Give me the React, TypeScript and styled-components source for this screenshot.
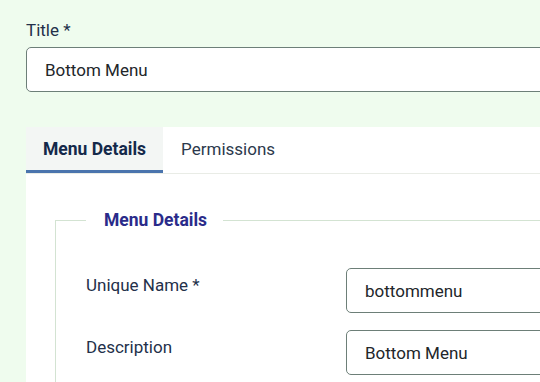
import React from 'react';
import styled, { createGlobalStyle } from 'styled-components';

const GlobalStyle = createGlobalStyle`
  html,
  body {
    margin: 0;
    padding: 0;
    background-color: #effcee;
    font-family: Roboto, "Liberation Sans", Arial, sans-serif;
    color: #22262a;
    overflow: hidden;
  }

  * {
    box-sizing: border-box;
  }
`;

const Page = styled.div`
  width: 540px;
  height: 382px;
  padding: 18px 0 0 26px;
  overflow: hidden;
`;

const FieldLabel = styled.label`
  display: block;
  margin-bottom: 5px;
  font-size: 17px;
  line-height: 24px;
  color: #23304a;
`;

const TextInput = styled.input<{ $width: number }>`
  display: block;
  width: ${(p) => p.$width}px;
  height: 45px;
  padding: 0 18px;
  border: 1px solid #6d7f78;
  border-radius: 5px;
  background-color: #fff;
  font-family: inherit;
  font-size: 17px;
  color: #22262a;
  outline: none;
`;

const Card = styled.div`
  width: 560px;
  margin-top: 35px;
  background-color: #fff;
`;

const TabList = styled.div`
  display: flex;
  border-bottom: 1px solid #e9ece6;
`;

const Tab = styled.button<{ $active?: boolean }>`
  height: 46px;
  padding: 0 17px 0 ${(p) => (p.$active ? 17 : 18)}px;
  border: 0;
  border-bottom: 3px solid ${(p) => (p.$active ? '#4a74ad' : 'transparent')};
  background-color: ${(p) => (p.$active ? '#f3f6f4' : '#fff')};
  font-family: inherit;
  font-size: ${(p) => (p.$active ? 17.5 : 17)}px;
  font-weight: ${(p) => (p.$active ? 700 : 400)};
  color: ${(p) => (p.$active ? '#14294a' : '#2c394c')};
  cursor: pointer;
`;

const TabBody = styled.div`
  padding: 34px 0 0 29px;
`;

const Fieldset = styled.fieldset`
  margin: 0;
  padding: 36px 0 20px 30px;
  border: 1px solid #d3e3d2;
  border-right: 0;
  min-width: 0;
`;

const Legend = styled.legend`
  padding: 0 16px 0 18px;
  font-size: 17.5px;
  font-weight: 700;
  line-height: 24px;
  color: #2a2b8a;
`;

const Row = styled.div`
  display: flex;
  align-items: flex-start;
  margin-bottom: 17px;
`;

const RowLabel = styled.label`
  width: 261px;
  padding-top: 5px;
  font-size: 17px;
  line-height: 24px;
  color: #23304a;
`;

export default function App() {
  return (
    <>
      <GlobalStyle />
      <Page>
        <FieldLabel htmlFor="title">Title *</FieldLabel>
        <TextInput id="title" $width={540} defaultValue="Bottom Menu" />
        <Card>
          <TabList>
            <Tab type="button" $active>
              Menu Details
            </Tab>
            <Tab type="button">Permissions</Tab>
          </TabList>
          <TabBody>
            <Fieldset>
              <Legend>Menu Details</Legend>
              <Row>
                <RowLabel htmlFor="menutype">Unique Name *</RowLabel>
                <TextInput id="menutype" $width={240} defaultValue="bottommenu" />
              </Row>
              <Row>
                <RowLabel htmlFor="description">Description</RowLabel>
                <TextInput id="description" $width={240} defaultValue="Bottom Menu" />
              </Row>
            </Fieldset>
          </TabBody>
        </Card>
      </Page>
    </>
  );
}
